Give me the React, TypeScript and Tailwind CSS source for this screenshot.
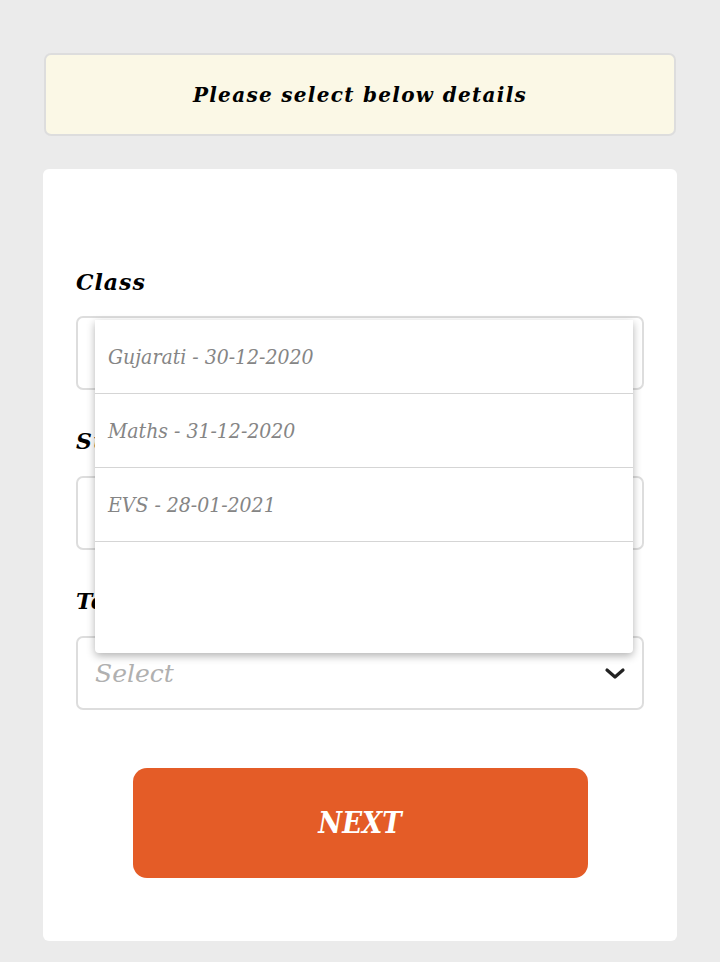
import React from "react";

const serif = { fontFamily: '"DejaVu Serif", "Liberation Serif", serif' };

function Chevron() {
  return (
    <svg width="22" height="14" viewBox="0 0 22 14">
      <polyline points="3,4 11,11 19,4" fill="none" stroke="#222" strokeWidth="3.2" strokeLinecap="round" strokeLinejoin="round" />
    </svg>
  );
}

function SelectBox({ placeholder }: { placeholder?: string }) {
  return (
    <div className="h-[74px] border-2 border-[#dddddd] rounded-[7px] flex items-center justify-between pl-[17px] pr-[16px]">
      <span className="text-[25px] italic text-[#b0b0b0] pt-[2px]">{placeholder ?? ""}</span>
      <Chevron />
    </div>
  );
}

function Label({ text, first }: { text: string; first?: boolean }) {
  return (
    <div className={first ? "text-[22px] font-bold italic leading-[30px] tracking-[1px] text-black mb-[19px]" : "text-[22px] font-bold italic leading-[30px] tracking-[1px] text-black mt-[36px] mb-[20px]"}>
      {text}
    </div>
  );
}

export default function App() {
  const items = ["Gujarati - 30-12-2020", "Maths - 31-12-2020", "EVS - 28-01-2021"];
  return (
    <div className="min-h-[962px] bg-[#ebebeb] px-[43px] pt-[53px]" style={serif}>
      <div className="h-[83px] mx-[1px] bg-[#fbf8e6] border-2 border-[#dddddd] rounded-[7px] flex items-center justify-center">
        <span className="text-[20px] font-bold italic tracking-[1.3px] text-black">Please select below details</span>
      </div>
      <div className="relative mt-[33px] bg-white rounded-[6px] pt-[98px] pb-[63px] px-[33px]">
        <Label text="Class" first />
        <SelectBox />
        <Label text="Subject" />
        <SelectBox />
        <Label text="Test" />
        <SelectBox placeholder="Select" />
        <div className="flex justify-center mt-[58px]">
          <button className="w-[455px] h-[110px] bg-[#e45c27] rounded-[14px] text-white text-[29px] font-bold italic font-stretch-condensed pt-[2px]">NEXT</button>
        </div>
        <div className="absolute left-[52px] top-[151px] w-[538px] h-[333px] bg-white rounded-b-[4px] shadow-[0_3px_8px_rgba(0,0,0,0.3)] flex flex-col">
          {items.map((t) => (
            <div key={t} className="h-[74px] border-b border-[#d5d5d5] flex items-center pl-[13px] pt-[3px]">
              <span className="text-[21px] italic text-[#858585] font-stretch-condensed">{t}</span>
            </div>
          ))}
        </div>
      </div>
    </div>
  );
}
